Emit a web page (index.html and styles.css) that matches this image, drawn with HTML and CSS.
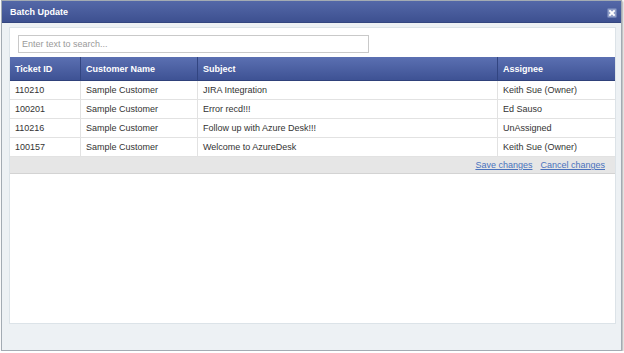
FILE: index.html
```html
<!DOCTYPE html>
<html lang="en">
<head>
    <meta charset="UTF-8">
    <title>Batch Update</title>
    <link rel="stylesheet" href="styles.css">
</head>
<body>
    <div class="window">
        <div class="titlebar">
            <span class="title">Batch Update</span>
            <span class="close">
                <svg width="10" height="10" viewBox="0 0 10 10">
                    <rect x="0.5" y="0.5" width="9" height="9" rx="1" fill="#8e9dc6" stroke="#6b7db2"/>
                    <path d="M3 3 L7 7 M7 3 L3 7" stroke="#fff" stroke-width="1.8" stroke-linecap="square"/>
                </svg>
            </span>
        </div>
        <div class="window-body">
            <div class="panel">
                <div class="search-row">
                    <input class="search" type="text" placeholder="Enter text to search...">
                </div>
                <table class="grid">
                    <thead>
                        <tr>
                            <th class="col-id">Ticket ID</th>
                            <th class="col-customer">Customer Name</th>
                            <th class="col-subject">Subject</th>
                            <th class="col-assignee">Assignee</th>
                        </tr>
                    </thead>
                    <tbody>
                        <tr>
                            <td>110210</td>
                            <td>Sample Customer</td>
                            <td>JIRA Integration</td>
                            <td>Keith Sue (Owner)</td>
                        </tr>
                        <tr>
                            <td>100201</td>
                            <td>Sample Customer</td>
                            <td>Error recd!!!</td>
                            <td>Ed Sauso</td>
                        </tr>
                        <tr>
                            <td>110216</td>
                            <td>Sample Customer</td>
                            <td>Follow up with Azure Desk!!!</td>
                            <td>UnAssigned</td>
                        </tr>
                        <tr>
                            <td>100157</td>
                            <td>Sample Customer</td>
                            <td>Welcome to AzureDesk</td>
                            <td>Keith Sue (Owner)</td>
                        </tr>
                    </tbody>
                </table>
                <div class="grid-footer">
                    <a href="#">Save changes</a>
                    <a href="#">Cancel changes</a>
                </div>
            </div>
        </div>
    </div>
</body>
</html>
```

FILE: styles.css
```css
body {
    margin: 0;
    background: #ffffff;
    font-family: "Liberation Sans", Arial, sans-serif;
    font-size: 9px;
    color: #333333;
}
.window {
    box-sizing: border-box;
    width: 621px;
    height: 351px;
    margin-left: 1px;
    border: 1px solid #a3abb3;
    background: #edf1f4;
    box-shadow: 1px 1px 2px rgba(0, 0, 0, 0.35);
}
.titlebar {
    height: 21px;
    display: flex;
    align-items: center;
    justify-content: space-between;
    padding: 0 4px 0 8px;
    background: linear-gradient(#5468a8, #3d5090);
    border-bottom: 1px solid #34467f;
}
.title {
    color: #ffffff;
    font-weight: bold;
    font-size: 9px;
    padding-top: 1px;
}
.close {
    display: flex;
    padding-top: 2px;
}
.window-body {
    padding: 4px 5px 0 7px;
}
.panel {
    box-sizing: border-box;
    height: 297px;
    border: 1px solid #dce3e8;
    background: #ffffff;
}
.search-row {
    padding: 7px 8px 4px 8px;
}
.search {
    box-sizing: border-box;
    display: block;
    width: 351px;
    height: 18px;
    margin: 0;
    padding: 0 3px;
    border: 1px solid #c9c9c9;
    font-family: "Liberation Sans", Arial, sans-serif;
    font-size: 9px;
    color: #333333;
    outline: none;
}
.search::placeholder {
    color: #9a9a9a;
}
.grid {
    width: 100%;
    border-spacing: 0;
    table-layout: fixed;
}
.grid th {
    height: 23px;
    padding: 0 5px;
    text-align: left;
    color: #ffffff;
    font-weight: bold;
    background: linear-gradient(#5b70b2, #3e5294);
    border-right: 1px solid #324581;
    border-bottom: 1px solid #2f417a;
}
.grid th:last-child {
    border-right: none;
}
.grid td {
    height: 18px;
    padding: 0 5px;
    border-right: 1px solid #e2e2e2;
    border-bottom: 1px solid #e2e2e2;
    white-space: nowrap;
}
.grid td:last-child {
    border-right: none;
}
.col-id {
    width: 60px;
}
.col-customer {
    width: 106px;
}
.col-subject {
    width: 289px;
}
.grid-footer {
    height: 16px;
    display: flex;
    justify-content: flex-end;
    align-items: center;
    gap: 8px;
    padding-right: 10px;
    background: #e6e6e6;
    border-bottom: 1px solid #d3d3d3;
}
.grid-footer a {
    color: #4a72bd;
    text-decoration: underline;
}
```
